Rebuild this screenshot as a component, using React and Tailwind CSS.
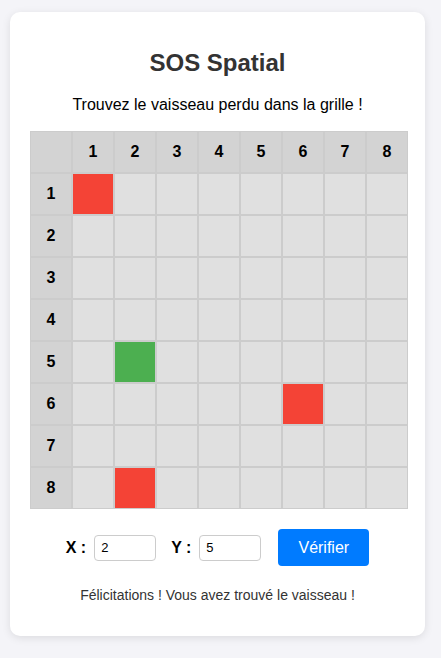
// SOS Spatial: grille 8x8, trouver le vaisseau
import { useState } from "react";

const COLS = [1, 2, 3, 4, 5, 6, 7, 8];
const ROWS = [1, 2, 3, 4, 5, 6, 7, 8];

// cases déjà tentées : "miss" en rouge, "hit" en vert
const SHOTS = {
  "1-1": "miss",
  "2-5": "hit",
  "6-6": "miss",
  "2-8": "miss",
};

function Cell({ x, y }) {
  const s = SHOTS[`${x}-${y}`];
  const bg =
    s === "hit" ? "bg-[#4caf50]" : s === "miss" ? "bg-[#f44336]" : "bg-[#e0e0e0]";
  return <div className={`h-[42px] w-[42px] border border-[#cccccc] ${bg}`} />;
}

function Head({ children }) {
  return (
    <div className="flex h-[42px] w-[42px] items-center justify-center border border-[#cccccc] bg-[#d3d3d3] text-base font-bold text-black">
      {children}
    </div>
  );
}

export default function App() {
  const [x, setX] = useState("2");
  const [y, setY] = useState("5");

  return (
    <div
      className="min-h-[658px] bg-[#f4f4f8] pt-[12px] pl-[10px]"
      style={{ fontFamily: '"Liberation Sans", Arial, sans-serif' }}
    >
      <div className="w-[415px] rounded-[10px] bg-white px-[20px] pt-[37px] pb-[33px] shadow-[0_2px_8px_rgba(0,0,0,0.1)]">
        <h1 className="text-center text-[24px] font-bold leading-[28px] text-[#333333]">
          SOS Spatial
        </h1>
        <p className="mt-[19px] text-center text-base leading-[18px] text-black">
          Trouvez le vaisseau perdu dans la grille !
        </p>

        <div className="mt-[17px] grid w-[378px] grid-cols-[repeat(9,42px)]">
          <Head />
          {COLS.map((c) => (
            <Head key={c}>{c}</Head>
          ))}
          {ROWS.map((r) => (
            <div key={r} className="contents">
              <Head>{r}</Head>
              {COLS.map((c) => (
                <Cell key={c} x={c} y={r} />
              ))}
            </div>
          ))}
        </div>

        <div className="mt-[20px] flex items-center justify-center">
          <span className="mr-[8px] text-base font-bold text-black">X :</span>
          <input
            value={x}
            onChange={(e) => setX(e.target.value)}
            className="h-[26px] w-[62px] rounded-[4px] border border-[#cccccc] px-[6px] text-[13px] text-black"
          />
          <span className="mr-[8px] ml-[15px] text-base font-bold text-black">Y :</span>
          <input
            value={y}
            onChange={(e) => setY(e.target.value)}
            className="h-[26px] w-[62px] rounded-[4px] border border-[#cccccc] px-[6px] text-[13px] text-black"
          />
          <button className="ml-[17px] h-[37px] w-[91px] rounded-[4px] bg-[#007bff] text-base text-white">
            Vérifier
          </button>
        </div>

        <p className="mt-[21px] text-center text-sm leading-[16px] text-[#333333]">
          Félicitations ! Vous avez trouvé le vaisseau !
        </p>
      </div>
    </div>
  );
}
